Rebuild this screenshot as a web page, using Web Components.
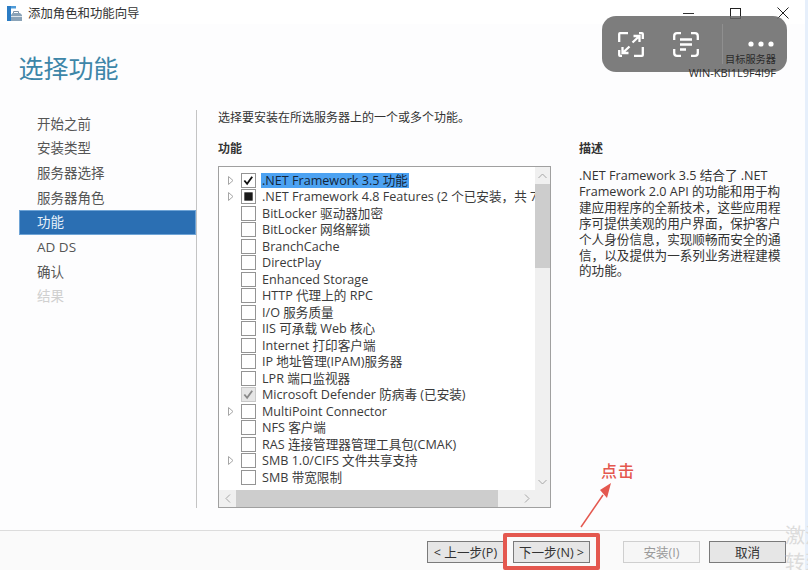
<!DOCTYPE html>
<html>
<head>
<meta charset="utf-8">
<title>添加角色和功能向导</title>
<style>
  html, body { margin: 0; height: 100%; overflow: hidden; background: #fdfdfe; }
  body { font: 12px "Open Sans", "Noto Sans CJK SC", sans-serif; color: #333; }
</style>
</head>
<body>
<wizard-window>
  <title-bar slot="title">添加角色和功能向导</title-bar>
  <wizard-header slot="header" heading="选择功能" server="WIN-KBI1L9F4I9F"></wizard-header>
  <wizard-nav slot="nav">
    <nav-step>开始之前</nav-step>
    <nav-step>安装类型</nav-step>
    <nav-step>服务器选择</nav-step>
    <nav-step>服务器角色</nav-step>
    <nav-step active>功能</nav-step>
    <nav-step>AD DS</nav-step>
    <nav-step>确认</nav-step>
    <nav-step disabled>结果</nav-step>
  </wizard-nav>
  <feature-page slot="main">
    <feature-list>
      <feature-row expander state="checked" selected>.NET Framework 3.5 功能</feature-row>
      <feature-row expander state="mixed">.NET Framework 4.8 Features (2 个已安装，共 7 个)</feature-row>
      <feature-row>BitLocker 驱动器加密</feature-row>
      <feature-row>BitLocker 网络解锁</feature-row>
      <feature-row>BranchCache</feature-row>
      <feature-row>DirectPlay</feature-row>
      <feature-row>Enhanced Storage</feature-row>
      <feature-row>HTTP 代理上的 RPC</feature-row>
      <feature-row>I/O 服务质量</feature-row>
      <feature-row>IIS 可承载 Web 核心</feature-row>
      <feature-row>Internet 打印客户端</feature-row>
      <feature-row>IP 地址管理(IPAM)服务器</feature-row>
      <feature-row>LPR 端口监视器</feature-row>
      <feature-row state="locked">Microsoft Defender 防病毒 (已安装)</feature-row>
      <feature-row expander>MultiPoint Connector</feature-row>
      <feature-row>NFS 客户端</feature-row>
      <feature-row>RAS 连接管理器管理工具包(CMAK)</feature-row>
      <feature-row expander>SMB 1.0/CIFS 文件共享支持</feature-row>
      <feature-row>SMB 带宽限制</feature-row>
    </feature-list>
  </feature-page>
  <wizard-footer slot="footer">
    <wizard-button>&lt; 上一步(P)</wizard-button>
    <wizard-button class="next">下一步(N) &gt;</wizard-button>
    <wizard-button disabled>安装(I)</wizard-button>
    <wizard-button>取消</wizard-button>
  </wizard-footer>
</wizard-window>
<float-toolbar></float-toolbar>
<click-callout></click-callout>
<activation-mark></activation-mark>

<script>
"use strict";
(() => {
  const define = (name, css, html) => {
    customElements.define(name, class extends HTMLElement {
      constructor() {
        super();
        this.attachShadow({mode: "open"}).innerHTML = `<style>${css}</style>${typeof html === "function" ? html(this) : html}`;
      }
    });
  };

  define("wizard-window", `
    :host {
      display: grid;
      grid-template-columns: 197px 1fr;
      grid-template-rows: 24px 86px 1fr 40px;
      width: 805px;
      height: 570px;
      border-right: 3px solid #e6effb;
      background: #fdfdfe;
    }
    ::slotted([slot=title]), ::slotted([slot=header]), ::slotted([slot=footer]) { grid-column: 1 / 3; }
  `, `
    <slot name="title"></slot>
    <slot name="header"></slot>
    <slot name="nav"></slot>
    <slot name="main"></slot>
    <slot name="footer"></slot>
  `);

  define("title-bar", `
    :host {
      display: flex;
      align-items: center;
      background: #fff;
      padding: 2px 0 0 7px;
      color: #333;
      font-size: 12.4px;
    }
    svg { display: block; margin-right: 6px; }
    .spacer { flex: 1; }
    .caps { display: flex; align-items: center; padding-right: 16px; }
    .caps span { display: block; }
    .min { width: 11px; height: 1px; background: #333; margin-right: 36px; margin-top: 1px; }
    .max { width: 9px; height: 9px; border: 1px solid #222; margin-right: 36px; }
  `, `
    <svg width="15" height="15" viewBox="0 0 15 15">
      <rect x="0" y="0" width="4" height="15" fill="#2b7cc4"/>
      <rect x="4" y="0" width="5" height="2.5" fill="#4f9bd8"/>
      <path d="M6.5 7 V5.5 H11.5 V7" fill="none" stroke="#7f93a6"/>
      <path d="M4 9 L5.5 7 H13 L15 9 V15 H4 Z" fill="#8aa3b8"/>
      <rect x="4" y="10" width="11" height="1" fill="#dfe6ec"/>
    </svg>
    <slot></slot>
    <span class="spacer"></span>
    <div class="caps">
      <span class="min"></span>
      <span class="max"></span>
      <svg width="12" height="12" viewBox="0 0 12 12" style="margin:0"><path d="M.5 .5 L11.5 11.5 M11.5 .5 L.5 11.5" stroke="#222" fill="none"/></svg>
    </div>
  `);

  define("wizard-header", `
    :host {
      display: flex;
      justify-content: space-between;
      align-items: flex-start;
      padding: 0 29px 0 18.5px;
    }
    h1 {
      margin: 25px 0 0;
      font: 400 25px/38px "Open Sans", "Noto Sans CJK SC", sans-serif;
      color: #3d86a8;
    }
    .server {
      position: relative;
      z-index: 1;
      margin-top: 29px;
      text-align: right;
      font-size: 10.2px;
      line-height: 13px;
      color: #2b2b2b;
    }
    .name { font-size: 11px; }
  `, host => `
    <h1>${host.getAttribute("heading")}</h1>
    <div class="server">目标服务器<br><span class="name">${host.getAttribute("server")}</span></div>
  `);

  define("wizard-nav", `
    :host {
      display: block;
      border-right: 1px solid #c4c4c4;
      margin-bottom: 22px;
      padding-left: 19px;
    }
    div { padding-top: 1.5px; }
  `, `<div><slot></slot></div>`);

  define("nav-step", `
    :host {
      display: block;
      height: 24.7px;
      line-height: 24.7px;
      padding-left: 18px;
      font-size: 13.5px;
      color: #555;
    }
    :host([active]) { background: #2b6fb3; color: #e8f2fb; box-shadow: inset 0 0 0 1px #6fa4d6; }
    :host([disabled]) { color: #d0d0d0; }
  `, `<slot></slot>`);

  define("feature-page", `
    :host {
      display: grid;
      grid-template-columns: 333px 1fr;
      grid-template-rows: auto auto 1fr;
      column-gap: 28px;
      padding-left: 21px;
      padding-right: 20px;
      min-height: 0;
    }
    .intro { grid-column: 1 / 3; height: 30px; line-height: 15px; font-size: 12px; color: #333; }
    h2 { margin: 0; height: 26px; font: 700 12px/18px "Open Sans", "Noto Sans CJK SC", sans-serif; color: #333; }
    .list { height: 342px; }
    .desc { font-size: 12.6px; line-height: 15.9px; color: #333; margin-top: 2px; }
  `, `
    <div class="intro">选择要安装在所选服务器上的一个或多个功能。</div>
    <h2>功能</h2>
    <h2>描述</h2>
    <div class="list"><slot></slot></div>
    <div class="desc">.NET Framework 3.5 结合了 .NET Framework 2.0 API 的功能和用于构建应用程序的全新技术，这些应用程序可提供美观的用户界面，保护客户个人身份信息，实现顺畅而安全的通信，以及提供为一系列业务进程建模的功能。</div>
  `);

  define("feature-list", `
    :host {
      display: grid;
      grid-template-columns: 1fr 15px;
      grid-template-rows: 1fr 17px;
      height: 100%;
      box-sizing: border-box;
      border: 1px solid #a0a0a0;
      background: #fff;
    }
    .rows { overflow: hidden; padding: 5px 0 0 2px; white-space: nowrap; }
    .bar { background: #f0f0f0; display: flex; }
    .v { flex-direction: column; align-items: stretch; }
    .btn { flex: none; display: flex; align-items: center; justify-content: center; }
    .v .btn { height: 17px; }
    .h .btn { width: 17px; }
    .track { flex: 1; display: flex; }
    .v .track { flex-direction: column; }
    .v .thumb { height: 84px; background: #cdcdcd; }
    .h .thumb { width: 262px; background: #cdcdcd; }
    .corner { background: #f0f0f0; }
    .h { justify-content: space-between; }
  `, `
    <div class="rows"><slot></slot></div>
    <div class="bar v">
      <div class="btn"><svg width="9" height="6" viewBox="0 0 9 6"><path d="M.5 5 L4.5 1 L8.5 5" fill="none" stroke="#a6a6a6"/></svg></div>
      <div class="track"><div class="thumb"></div></div>
      <div class="btn"><svg width="9" height="6" viewBox="0 0 9 6"><path d="M.5 1 L4.5 5 L8.5 1" fill="none" stroke="#a6a6a6"/></svg></div>
    </div>
    <div class="bar h">
      <div class="btn"><svg width="6" height="9" viewBox="0 0 6 9"><path d="M5 .5 L1 4.5 L5 8.5" fill="none" stroke="#a6a6a6"/></svg></div>
      <div class="track"><div class="thumb"></div></div>
      <div class="btn"><svg width="6" height="9" viewBox="0 0 6 9"><path d="M1 .5 L5 4.5 L1 8.5" fill="none" stroke="#a6a6a6"/></svg></div>
    </div>
    <div class="corner"></div>
  `);

  const marks = {
    checked: `<path d="M2.5 7 L5.5 10.5 L11 3" fill="none" stroke="#111" stroke-width="2"/>`,
    mixed: `<rect x="2.5" y="2.5" width="9" height="9" fill="#1a1a1a"/>`,
    locked: `<path d="M2.5 7 L5.5 10.5 L11 3" fill="none" stroke="#8a8a8a" stroke-width="2"/>`,
  };

  define("feature-row", `
    :host {
      display: flex;
      align-items: center;
      height: 16.5px;
      font-size: 12.6px;
      color: #3a3a3a;
    }
    .exp { width: 20px; flex: none; display: flex; padding-left: 7px; box-sizing: border-box; }
    .box {
      width: 15px;
      height: 15px;
      box-sizing: border-box;
      border: 1px solid #949494;
      flex: none;
      margin-right: 5px;
      background: #fff;
    }
    .box svg { display: block; margin: 0; }
    .box.locked { background: #e6e6e6; border-color: #c8c8c8; }
    .label { padding: 0 1px; line-height: 15px; }
    :host([selected]) .label { background: #4ca2f2; color: #14263a; }
  `, host => {
    const state = host.getAttribute("state") || "";
    return `
      <span class="exp">${host.hasAttribute("expander") ? `<svg width="6" height="9" viewBox="0 0 6 9"><path d="M.5 .5 L5 4.5 L.5 8.5 Z" fill="#fff" stroke="#a6a6a6"/></svg>` : ""}</span>
      <span class="box ${state}"><svg width="13" height="13" viewBox="0 0 14 14">${marks[state] || ""}</svg></span>
      <span class="label"><slot></slot></span>
    `;
  });

  define("wizard-footer", `
    :host {
      display: flex;
      justify-content: flex-end;
      align-items: center;
      gap: 9px;
      padding: 2px 19px 0 0;
      border-top: 1px solid #dcdcdc;
      background: #fafafa;
      height: 40px;
      box-sizing: border-box;
    }
  `, `<slot></slot>`);

  define("wizard-button", `
    :host {
      display: block;
      width: 77px;
      height: 22px;
      box-sizing: border-box;
      border: 1px solid #7a7a7a;
      background: #e6e6e6;
      text-align: center;
      line-height: 21px;
      font-size: 12.6px;
      color: #333;
    }
    :host([disabled]) { border-color: #cfcfcf; background: #f6f6f6; color: #9a9a9a; }
    :host(.next) { margin-right: 24px; }
  `, `<slot></slot>`);

  define("float-toolbar", `
    :host {
      position: absolute;
      left: 602px;
      top: 16px;
      width: 185px;
      height: 56px;
      border-radius: 14px;
      background: rgba(104, 104, 104, .86);
      display: block;
    }
    svg { position: absolute; display: block; }
    .sep { position: absolute; left: 120px; top: 8px; bottom: 8px; width: 1px; background: rgba(255,255,255,.14); }
  `, `
    <svg style="left:16px;top:16px" width="26" height="25" viewBox="0 0 26 25" fill="none" stroke="#fff" stroke-width="2.3">
      <path d="M10 1.2 H2 Q1.2 1.2 1.2 2 V10 M16 23.8 H24 Q24.8 23.8 24.8 23 V15 M1.2 18 V23 Q1.2 23.8 2 23.8 H4 M24.8 7 V2 Q24.8 1.2 24 1.2 H21"/>
      <path d="M14.5 10.5 L22 3.5 M15.5 4 H21.5 V10 M11.5 14.5 L4 21.5 M4.5 15 V21 H10.5"/>
    </svg>
    <svg style="left:71px;top:16px" width="26" height="25" viewBox="0 0 26 25" fill="none" stroke="#fff" stroke-width="2.3">
      <path d="M8 1.2 H4 Q1.2 1.2 1.2 4 V8 M18 1.2 H22 Q24.8 1.2 24.8 4 V8 M1.2 17 V21 Q1.2 23.8 4 23.8 H8 M24.8 17 V21 Q24.8 23.8 22 23.8 H18"/>
      <path d="M7 7.5 H19 M7 12.5 H19 M7 17.5 H13"/>
    </svg>
    <span class="sep"></span>
    <svg style="left:146px;top:25px" width="26" height="6" viewBox="0 0 26 6" fill="#fff">
      <circle cx="3" cy="3" r="2.6"/><circle cx="13" cy="3" r="2.6"/><circle cx="23" cy="3" r="2.6"/>
    </svg>
  `);

  define("click-callout", `
    :host { position: absolute; left: 0; top: 0; width: 808px; height: 570px; pointer-events: none; display: block; }
    .frame {
      position: absolute;
      left: 503px;
      top: 533px;
      width: 97px;
      height: 37px;
      box-sizing: border-box;
      border: 4px solid #e4584f;
      border-radius: 2px;
    }
    .word {
      position: absolute;
      left: 601px;
      top: 458px;
      font: 500 16px/24px "Noto Sans CJK SC", sans-serif;
      letter-spacing: 1px;
      color: #e4584f;
    }
    svg { position: absolute; left: 575px; top: 480px; }
  `, `
    <div class="frame"></div>
    <div class="word">点击</div>
    <svg width="40" height="50" viewBox="0 0 40 50">
      <path d="M6 47 L28 15" stroke="#e4584f" stroke-width="1.5" fill="none"/>
      <path d="M36 3 L25 10 L32 18 Z" fill="#e4584f"/>
    </svg>
  `);

  define("activation-mark", `
    :host {
      position: absolute;
      left: 785px;
      top: 521px;
      width: 23px;
      height: 49px;
      overflow: hidden;
      display: block;
      font: 20px/27px "Noto Sans CJK SC", sans-serif;
      color: #dcdcdc;
      white-space: nowrap;
    }
  `, `激活<br>转到`);
})();
</script>
</body>
</html>
